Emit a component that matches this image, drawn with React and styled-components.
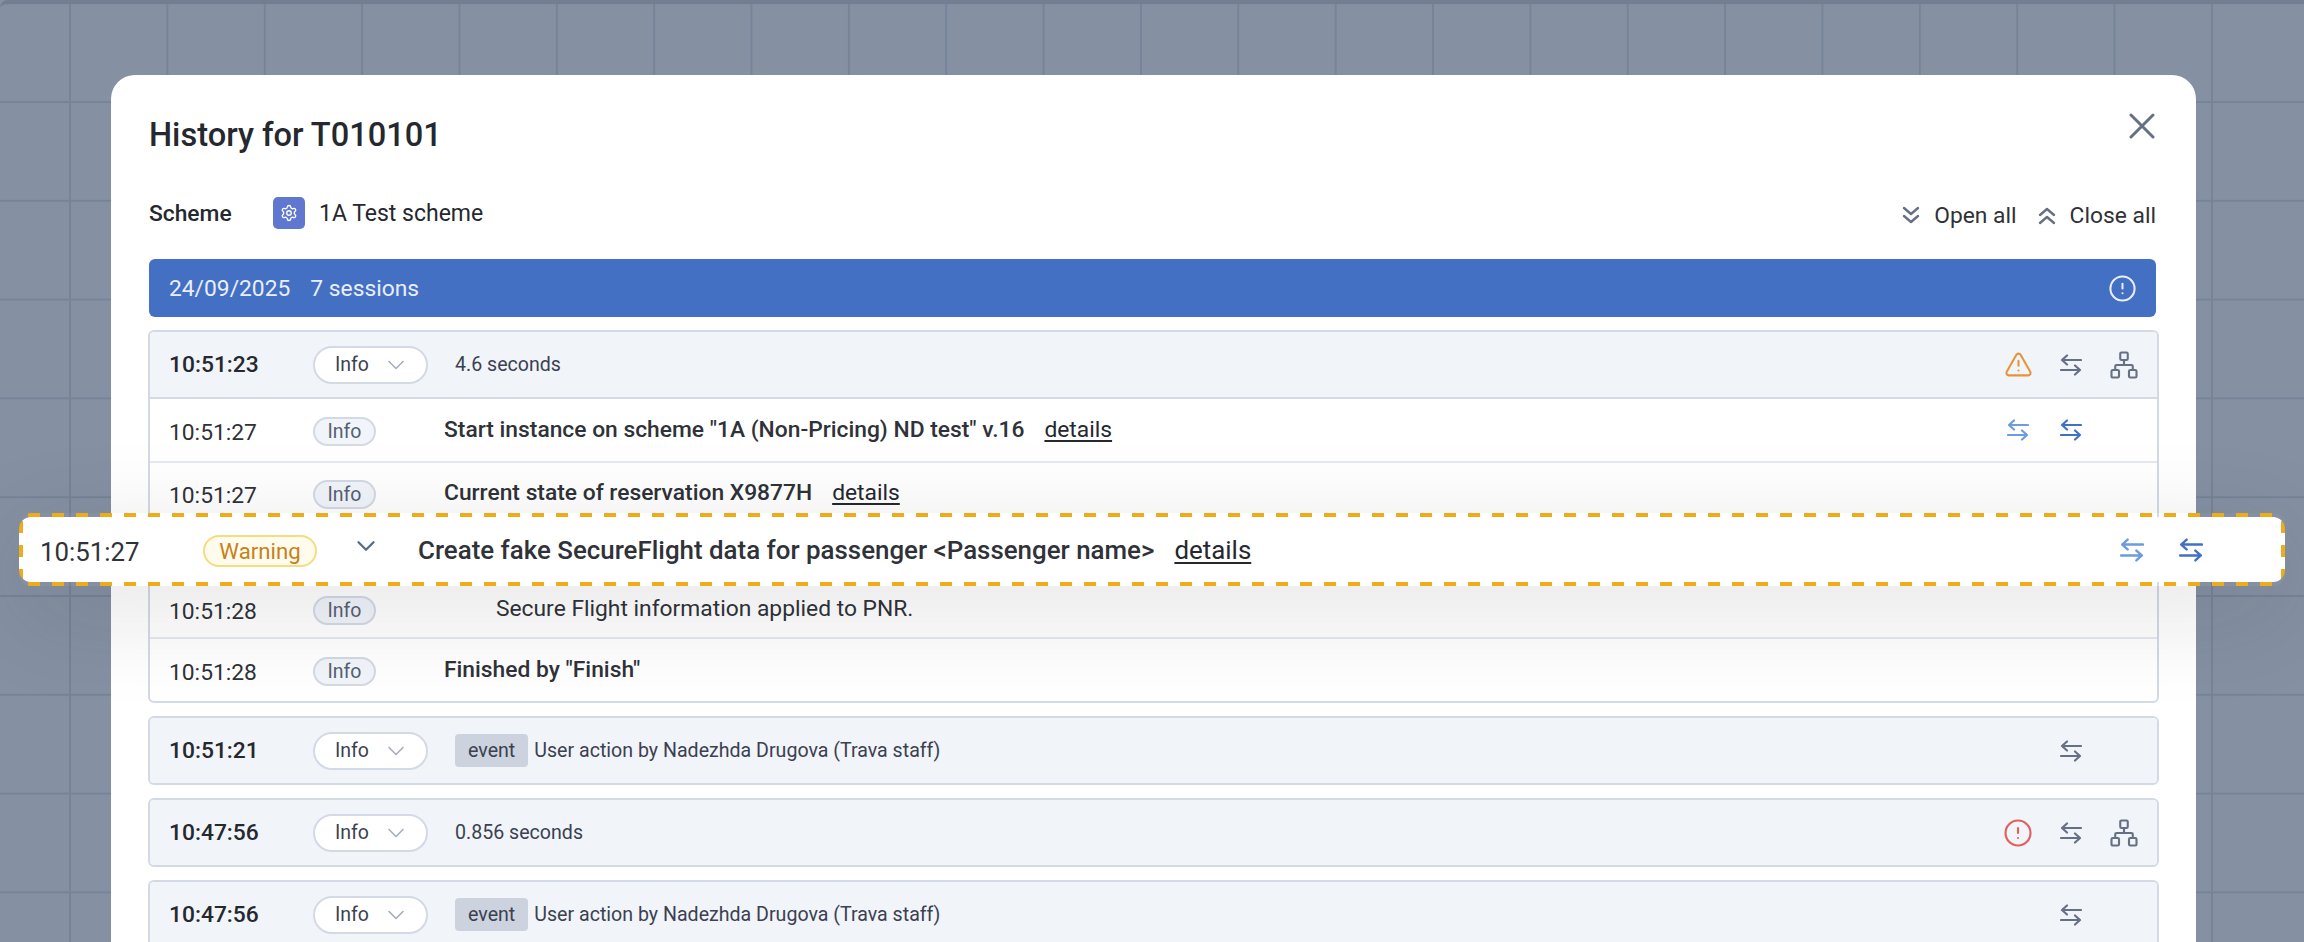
import React from 'react'
import styled, { createGlobalStyle } from 'styled-components'
import { ChevronDown, TriangleAlert, CircleAlert, Network, Settings } from 'lucide-react'

const GlobalStyle = createGlobalStyle`
  html, body {
    margin: 0;
    padding: 0;
    background: #8591a3;
  }
  body {
    font-family: Roboto, "Liberation Sans", sans-serif;
    color: #25282e;
  }
`

const Backdrop = styled.div`
  position: relative;
  height: 942px;
  padding: 75px 108px 0 111px;
  box-sizing: border-box;
  overflow: hidden;
  border-top: 4px solid #737e92;
  border-radius: 8px 0 0 0;
  background-color: #8591a3;
  background-image:
    linear-gradient(90deg, #778398 2px, transparent 2px),
    linear-gradient(180deg, #778398 2px, transparent 2px);
  background-size: 97.36px 98.8px;
  background-position: 69px 97px;
`

const Modal = styled.div`
  margin-top: -4px;
  height: 900px;
  padding: 0 40px 0 38px;
  background: #fff;
  border-radius: 24px 24px 0 0;
`

const TitleRow = styled.div`
  display: flex;
  align-items: center;
  justify-content: space-between;
  height: 118px;
`

const Title = styled.h1`
  margin: 2px 0 0;
  font-size: 32.6px;
  font-weight: 500;
  line-height: 40px;
  color: #25282e;
`

const CloseButton = styled.div`
  display: flex;
  margin-top: -17px;
  margin-right: 1px;
  color: #667085;
`

const SchemeRow = styled.div`
  display: flex;
  align-items: center;
  height: 40px;
  margin-bottom: 26px;
`

const SchemeLabel = styled.span`
  width: 124px;
  font-size: 22.8px;
  font-weight: 500;
`

const SchemeBadge = styled.span`
  display: flex;
  align-items: center;
  justify-content: center;
  width: 32px;
  height: 32px;
  border-radius: 5px;
  background: #5f77cf;
  color: #fff;
`

const SchemeName = styled.span`
  margin-left: 14px;
  font-size: 23px;
  flex: 1;
`

const ToggleAll = styled.span`
  display: flex;
  align-items: center;
  gap: 14px;
  margin-top: 4px;
  margin-left: 21px;
  font-size: 22.8px;
  color: #2f3238;
  svg {
    color: #667085;
  }
`

const DateBar = styled.div`
  display: flex;
  align-items: center;
  height: 58px;
  margin: 0 0 13px;
  padding: 0 19px 0 20px;
  border-radius: 6px;
  background: #4470c4;
  color: #e8eefc;
  font-size: 22.8px;
`

const SessionCount = styled.span`
  margin-left: 20px;
  flex: 1;
`

const Group = styled.div`
  width: 2011px;
  margin: 0 0 13px -1px;
  box-sizing: border-box;
  border: 2px solid #d3d9e5;
  border-radius: 6px;
  overflow: hidden;
`

const GroupHead = styled.div`
  display: flex;
  align-items: center;
  height: 65px;
  padding-left: 19px;
  background: #f1f4f9;
  border-bottom: ${p => (p.$open ? '2px solid #d3d9e5' : 'none')};
`

const HeadTime = styled.span`
  width: 144px;
  font-size: 22.8px;
  font-weight: 500;
  color: #25282e;
`

const LevelSelect = styled.span`
  display: flex;
  align-items: center;
  justify-content: space-between;
  width: 115px;
  height: 38px;
  box-sizing: border-box;
  padding: 0 16px 0 20px;
  border: 2px solid #d3d9e5;
  border-radius: 19px;
  background: #fff;
  font-size: 19.5px;
  color: #3b4150;
  svg {
    color: #a6aebd;
  }
`

const HeadText = styled.span`
  margin-left: 27px;
  font-size: 19.6px;
  color: #3b4150;
  flex: 1;
`

const EventTag = styled.span`
  display: inline-block;
  height: 33px;
  margin-right: 6px;
  padding: 0 13px;
  border-radius: 4px;
  background: #ccd2de;
  line-height: 33px;
  color: #3b4150;
`

const Actions = styled.div`
  display: flex;
  flex: none;
  align-items: center;
  gap: 29px;
  padding-right: 21px;
`

const Slot = styled.span`
  display: flex;
  justify-content: center;
  width: 24px;
  color: ${p => p.$color};
  svg {
    flex: none;
  }
`

const Row = styled.div`
  display: flex;
  align-items: center;
  height: ${p => p.$height}px;
  padding-left: 19px;
  border-top: ${p => (p.$first ? 'none' : '2px solid #e6e9f0')};
  box-sizing: border-box;
`

const RowTime = styled.span`
  width: 144px;
  font-size: 22.8px;
  margin-top: 4px;
  color: #2f3238;
`

const LevelTag = styled.span`
  display: flex;
  align-items: center;
  justify-content: center;
  width: 63px;
  height: 29px;
  box-sizing: border-box;
  margin-top: 2px;
  border: 2px solid #d3d9e5;
  border-radius: 15px;
  background: #f1f4f9;
  font-size: 19.5px;
  color: #566074;
`

const RowText = styled.span`
  margin-left: ${p => p.$indent}px;
  margin-top: -2px;
  flex: 1;
  font-size: 22.8px;
  font-weight: ${p => p.$weight};
  color: #2f3238;
`

const DetailsLink = styled.a`
  margin-left: 20px;
  font-weight: 400;
  color: #25282e;
  text-decoration: underline;
  text-underline-offset: 3px;
`

const Highlight = styled.div`
  position: absolute;
  top: 509px;
  left: 19px;
  right: 19px;
  height: 73px;
  padding: 4px 0;
  box-sizing: border-box;
  box-shadow: 0 24px 100px rgba(20, 25, 40, 0.13);
  border-radius: 12px;
  background:
    linear-gradient(90deg, #eeab1a 50%, transparent 50%) 9px 0 / 24px 4px repeat-x,
    linear-gradient(90deg, #eeab1a 50%, transparent 50%) 9px 100% / 24px 4px repeat-x;
`

const HighlightInner = styled.div`
  display: flex;
  align-items: center;
  height: 100%;
  padding-left: 21px;
  border-radius: 12px;
  background:
    linear-gradient(180deg, #eeab1a 50%, transparent 50%) 0 4px / 4px 24px repeat-y,
    linear-gradient(180deg, #eeab1a 50%, transparent 50%) 100% 4px / 4px 24px repeat-y,
    #fff;
`

const HighlightTime = styled.span`
  width: 163px;
  margin-top: 4px;
  font-size: 25.8px;
  color: #2f3238;
`

const WarningTag = styled.span`
  display: flex;
  align-items: center;
  justify-content: center;
  width: 114px;
  height: 32px;
  box-sizing: border-box;
  margin-top: 2px;
  border: 2px solid #f6dc7f;
  border-radius: 16px;
  background: #fffcee;
  font-size: 22.2px;
  color: #c9801a;
`

const HighlightChevron = styled.span`
  display: flex;
  width: 30px;
  margin-left: 34px;
  margin-top: -7px;
  color: #566a8c;
`

const HighlightText = styled.span`
  margin-left: 37px;
  flex: 1;
  font-size: 25.9px;
  font-weight: 500;
  color: #2f3238;
`

const HighlightActions = styled.div`
  display: flex;
  gap: 35px;
  padding-right: 82px;
`

const SwapIcon = ({ size = 22 }) => (
  <svg width={size} height={size} viewBox="0 0 22 22" fill="none" stroke="currentColor" strokeWidth="2.2" strokeLinecap="round" strokeLinejoin="round">
    <path d="M21 6H2M7 1.5 2 6l5 4.5" />
    <path d="M1 16h19M15 11.5l5 4.5-5 4.5" />
  </svg>
)

const CloseIcon = () => (
  <svg width="26" height="26" viewBox="0 0 26 26" fill="none" stroke="currentColor" strokeWidth="3" strokeLinecap="round">
    <path d="M2 2l22 22M24 2 2 24" />
  </svg>
)

const DoubleChevron = ({ up }) => (
  <svg width="18" height="19" viewBox="0 0 18 19" fill="none" stroke="currentColor" strokeWidth="2.4" strokeLinecap="round" strokeLinejoin="round">
    <path d={up ? 'M2 9l7-6 7 6M2 17l7-6 7 6' : 'M2 2l7 6 7-6M2 10l7 6 7-6'} />
  </svg>
)

const grey = '#667085'
const lightBlue = '#6c9be0'
const blue = '#4470c4'

const Swap = ({ color }) => (
  <Slot $color={color}>
    <SwapIcon />
  </Slot>
)

const Level = () => (
  <LevelSelect>
    Info
    <ChevronDown size={28} strokeWidth={1.4} />
  </LevelSelect>
)

const App = () => (
  <>
    <GlobalStyle />
    <Backdrop>
      <Modal>
        <TitleRow>
          <Title>History for T010101</Title>
          <CloseButton>
            <CloseIcon />
          </CloseButton>
        </TitleRow>

        <SchemeRow>
          <SchemeLabel>Scheme</SchemeLabel>
          <SchemeBadge>
            <Settings size={18} strokeWidth={1.8} />
          </SchemeBadge>
          <SchemeName>1A Test scheme</SchemeName>
          <ToggleAll>
            <DoubleChevron />
            Open all
          </ToggleAll>
          <ToggleAll>
            <DoubleChevron up />
            Close all
          </ToggleAll>
        </SchemeRow>

        <DateBar>
          24/09/2025
          <SessionCount>7 sessions</SessionCount>
          <CircleAlert size={29} strokeWidth={1.7} />
        </DateBar>

        <Group>
          <GroupHead $open>
            <HeadTime>10:51:23</HeadTime>
            <Level />
            <HeadText>4.6 seconds</HeadText>
            <Actions>
              <Slot $color="#e8923a"><TriangleAlert size={29} strokeWidth={1.7} /></Slot>
              <Swap color={grey} />
              <Slot $color={grey}><Network size={30} strokeWidth={1.7} /></Slot>
            </Actions>
          </GroupHead>
          <Row $height={62} $first>
            <RowTime>10:51:27</RowTime>
            <LevelTag>Info</LevelTag>
            <RowText $indent={68} $weight={500}>
              Start instance on scheme "1A (Non-Pricing) ND test" v.16
              <DetailsLink>details</DetailsLink>
            </RowText>
            <Actions>
              <Swap color={lightBlue} />
              <Swap color={blue} />
              <Slot />
            </Actions>
          </Row>
          <Row $height={62}>
            <RowTime>10:51:27</RowTime>
            <LevelTag>Info</LevelTag>
            <RowText $indent={68} $weight={500}>
              Current state of reservation X9877H
              <DetailsLink>details</DetailsLink>
            </RowText>
          </Row>
          <Row $height={56} />
          <Row $height={58}>
            <RowTime>10:51:28</RowTime>
            <LevelTag>Info</LevelTag>
            <RowText $indent={120} $weight={400}>
              Secure Flight information applied to PNR.
            </RowText>
          </Row>
          <Row $height={64}>
            <RowTime>10:51:28</RowTime>
            <LevelTag>Info</LevelTag>
            <RowText $indent={68} $weight={500}>
              Finished by "Finish"
            </RowText>
          </Row>
        </Group>

        <Group>
          <GroupHead>
            <HeadTime>10:51:21</HeadTime>
            <Level />
            <HeadText>
              <EventTag>event</EventTag>
              User action by Nadezhda Drugova (Trava staff)
            </HeadText>
            <Actions>
              <Slot />
              <Swap color={grey} />
              <Slot />
            </Actions>
          </GroupHead>
        </Group>

        <Group>
          <GroupHead>
            <HeadTime>10:47:56</HeadTime>
            <Level />
            <HeadText>0.856 seconds</HeadText>
            <Actions>
              <Slot $color="#e2605c"><CircleAlert size={30} strokeWidth={1.7} /></Slot>
              <Swap color={grey} />
              <Slot $color={grey}><Network size={30} strokeWidth={1.7} /></Slot>
            </Actions>
          </GroupHead>
        </Group>

        <Group>
          <GroupHead>
            <HeadTime>10:47:56</HeadTime>
            <Level />
            <HeadText>
              <EventTag>event</EventTag>
              User action by Nadezhda Drugova (Trava staff)
            </HeadText>
            <Actions>
              <Slot />
              <Swap color={grey} />
              <Slot />
            </Actions>
          </GroupHead>
        </Group>
      </Modal>

      <Highlight>
        <HighlightInner>
          <HighlightTime>10:51:27</HighlightTime>
          <WarningTag>Warning</WarningTag>
          <HighlightChevron>
            <ChevronDown size={30} strokeWidth={1.8} />
          </HighlightChevron>
          <HighlightText>
            Create fake SecureFlight data for passenger &lt;Passenger name&gt;
            <DetailsLink>details</DetailsLink>
          </HighlightText>
          <HighlightActions>
            <Slot $color={lightBlue}><SwapIcon size={24} /></Slot>
            <Slot $color={blue}><SwapIcon size={24} /></Slot>
          </HighlightActions>
        </HighlightInner>
      </Highlight>
    </Backdrop>
  </>
)

export default App
